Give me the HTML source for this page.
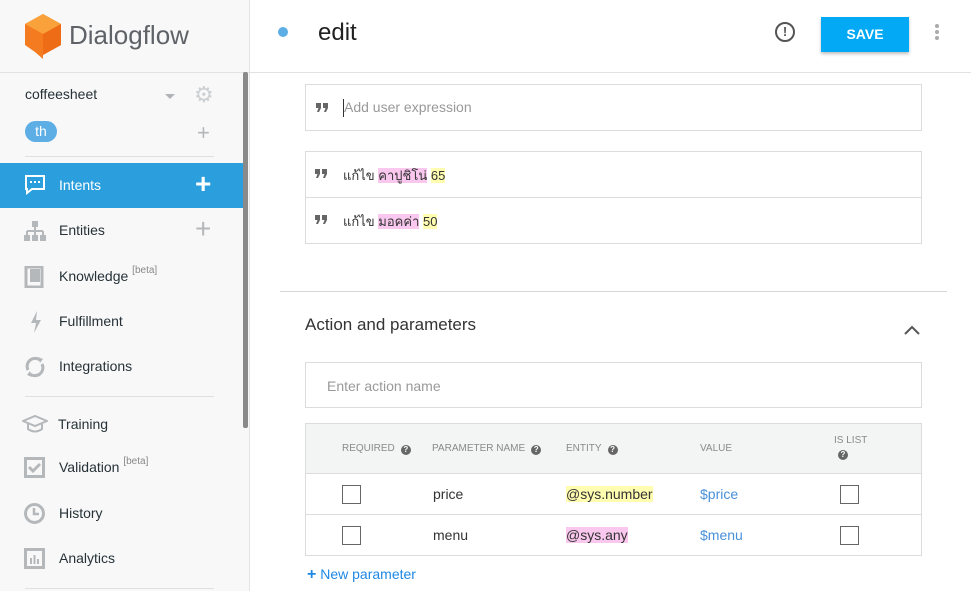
<!DOCTYPE html>
<html><head><meta charset="utf-8"><style>
*{box-sizing:border-box;margin:0;padding:0}
body{width:971px;height:591px;overflow:hidden;position:relative;font-family:"Liberation Sans","Noto Sans CJK SC",sans-serif;background:#fff;color:#333}
.abs{position:absolute}
#side{left:0;top:0;width:250px;height:591px;background:#f8f8f8;border-right:1px solid #e4e4e4}
.nav{position:absolute;left:0;width:243px;height:45px;font-size:14px;color:#263238}
.nav span.t{position:absolute;left:59px;top:14px}
.nav sup{font-size:10px;color:#888;vertical-align:top;position:relative;top:-3px}
.ic{position:absolute;left:24px;top:12px}
.hl{background:#fffdb0}.pk{background:#fac8ef}
.box{border:1px solid #dcdcdc;position:absolute}
.q{position:absolute}
.cb{position:absolute;width:19px;height:19px;border:1px solid #666;background:#fff}
.hd{position:absolute;top:19px;font-size:10px;color:#8a8a8a}
.qm{display:inline-block;width:10px;height:10px;border-radius:50%;background:#666;color:#fff;font-size:8px;text-align:center;line-height:10px;font-weight:bold;margin-left:6px;vertical-align:-1px}
</style></head><body>
<div id="side" class="abs">
 <svg class="abs" style="left:25px;top:14px" width="36" height="45" viewBox="0 0 36 45"><polygon points="18,0 36,10 36,31 18,41 18,45 10,38 0,31 0,10" fill="#f47b20"/><polygon points="18,0 36,10 18,20 0,10" fill="#f9a23b"/><polygon points="18,20 36,10 36,31 18,41" fill="#ef6c17"/></svg>
 <div class="abs" style="left:69px;top:20px;font-size:26px;color:#5f6368">Dialogflow</div>
 <div class="abs" style="left:0;top:72px;width:250px;border-top:1px solid #e2e2e2"></div>
 <div class="abs" style="left:243px;top:72px;width:5px;height:356px;background:#8a8a8a;border-radius:2px"></div>
 <div class="abs" style="left:25px;top:86px;font-size:14px;color:#263238">coffeesheet</div>
 <div class="abs" style="left:165px;top:94px;width:0;height:0;border-left:5px solid transparent;border-right:5px solid transparent;border-top:5px solid #b0b4b8"></div>
 <div class="abs" style="left:194px;top:84px;font-size:22px;color:#cdd0d3;line-height:22px">⚙</div>
 <div class="abs" style="left:25px;top:121px;width:32px;height:21px;border-radius:11px;background:#5eaee6;color:#fff;font-size:14px;text-align:center;line-height:20px">th</div>
 <div class="abs" style="left:197px;top:120px;font-size:22px;color:#b5b8bb;line-height:26px">+</div>
 <div class="abs" style="left:25px;top:156px;width:189px;border-top:1px solid #e0e0e0"></div>
 <div class="nav" style="top:163px;background:#2b9fdd;color:#fff"><svg class="ic" width="22" height="20" viewBox="0 0 22 20"><path d="M2 1h18v13H8l-5 4v-4H2z" fill="none" stroke="#fff" stroke-width="2"/><rect x="6" y="6" width="2" height="2" fill="#fff"/><rect x="10" y="6" width="2" height="2" fill="#fff"/><rect x="14" y="6" width="2" height="2" fill="#fff"/></svg><span class="t">Intents</span><span class="abs" style="left:195px;top:5px;font-size:28px;font-weight:bold">+</span></div>
 <div class="nav" style="top:208px"><svg class="ic" width="22" height="22" viewBox="0 0 22 22"><rect x="8" y="1" width="6" height="6" fill="#b5b8bb"/><path d="M11 7v4M3 11h16M3 11v4M11 11v4M19 11v4" stroke="#b5b8bb" stroke-width="2"/><rect x="0" y="15" width="6" height="6" fill="#b5b8bb"/><rect x="8" y="15" width="6" height="6" fill="#b5b8bb"/><rect x="16" y="15" width="6" height="6" fill="#b5b8bb"/></svg><span class="t">Entities</span><span class="abs" style="left:195px;top:5px;font-size:28px;color:#b5b8bb">+</span></div>
 <div class="nav" style="top:254px"><svg class="ic" width="20" height="22" viewBox="0 0 20 22"><rect x="2" y="1" width="16" height="20" fill="none" stroke="#b5b8bb" stroke-width="3"/><rect x="6" y="3" width="10" height="13" fill="#b5b8bb"/></svg><span class="t">Knowledge <sup>[beta]</sup></span></div>
 <div class="nav" style="top:299px"><svg class="ic" width="20" height="22" viewBox="0 0 20 22" style="left:28px"><path d="M9 0L3 12h5l-2 10 7-13H8z" fill="#b5b8bb"/></svg><span class="t">Fulfillment</span></div>
 <div class="nav" style="top:344px"><svg class="ic" width="22" height="22" viewBox="0 0 22 22"><path d="M4 14a8 8 0 0 1 12-10M18 8a8 8 0 0 1-12 10" fill="none" stroke="#b5b8bb" stroke-width="3"/><path d="M14 1l5 2-3 4zM8 21l-5-2 3-4z" fill="#b5b8bb"/></svg><span class="t">Integrations</span></div>
 <div class="abs" style="left:25px;top:396px;width:189px;border-top:1px solid #e0e0e0"></div>
 <div class="nav" style="top:402px"><svg class="ic" width="26" height="20" viewBox="0 0 26 20" style="left:22px"><path d="M1 7l12-5 12 5-12 5z" fill="none" stroke="#b5b8bb" stroke-width="2"/><path d="M6 10v5q7 5 14 0v-5" fill="none" stroke="#b5b8bb" stroke-width="2"/></svg><span class="t" style="left:58px">Training</span></div>
 <div class="nav" style="top:445px"><svg class="ic" width="21" height="21" viewBox="0 0 21 21"><rect x="0" y="0" width="21" height="21" fill="#b5b8bb"/><rect x="3" y="3" width="15" height="15" fill="#f8f8f8"/><path d="M5 10l4 4 7-7" fill="none" stroke="#b5b8bb" stroke-width="3"/></svg><span class="t">Validation <sup>[beta]</sup></span></div>
 <div class="nav" style="top:491px"><svg class="ic" width="21" height="21" viewBox="0 0 21 21"><circle cx="10.5" cy="10.5" r="9" fill="none" stroke="#b5b8bb" stroke-width="3"/><path d="M10 5v6h5" fill="none" stroke="#b5b8bb" stroke-width="2.5"/></svg><span class="t">History</span></div>
 <div class="nav" style="top:536px"><svg class="ic" width="21" height="21" viewBox="0 0 21 21"><rect x="0" y="0" width="21" height="21" fill="#b5b8bb"/><rect x="3" y="3" width="15" height="15" fill="#f8f8f8"/><rect x="6" y="10" width="2" height="6" fill="#b5b8bb"/><rect x="9.5" y="7" width="2" height="9" fill="#b5b8bb"/><rect x="13" y="11" width="2" height="5" fill="#b5b8bb"/></svg><span class="t">Analytics</span></div>
 <div class="abs" style="left:25px;top:588px;width:189px;border-top:1px solid #e0e0e0"></div>
</div>

<div class="abs" style="left:278px;top:27px;width:10px;height:10px;border-radius:50%;background:#5eaee6"></div>
<div class="abs" style="left:318px;top:19px;font-size:24px;color:#212121">edit</div>
<div class="abs" style="left:775px;top:22px;width:20px;height:20px;border:2px solid #555;border-radius:50%;text-align:center;font-size:13px;line-height:16px;font-weight:bold;color:#555">!</div>
<div class="abs" style="left:821px;top:17px;width:88px;height:35px;background:#03a9f4;color:#fff;font-size:14px;font-weight:bold;text-align:center;line-height:35px;box-shadow:0 2px 3px rgba(0,0,0,.25)">SAVE</div>
<div class="abs" style="left:935px;top:24px;width:4px;height:4px;border-radius:2px;background:#aaa;box-shadow:0 6px 0 #aaa,0 12px 0 #aaa"></div>
<div class="abs" style="left:250px;top:72px;width:721px;border-top:1px solid #e2e2e2"></div>

<svg width="0" height="0" style="position:absolute"><defs><symbol id="qq" viewBox="0 0 12 9"><path d="M0 0h5v5l-2 4H1l1.5-4H0zM7 0h5v5l-2 4H8l1.5-4H7z" fill="#666"/></symbol></defs></svg>
<div class="box" style="left:305px;top:84px;width:617px;height:47px"><svg class="q" style="left:10px;top:18px" width="12" height="9"><use href="#qq"/></svg><span class="abs" style="left:37px;top:14px;width:1px;height:18px;background:#333"></span><span class="abs" style="left:38px;top:14px;font-size:14px;color:#999">Add user expression</span></div>
<div class="box" style="left:305px;top:151px;width:617px;height:93px"></div>
<div class="abs" style="left:306px;top:197px;width:615px;border-top:1px solid #dcdcdc"></div>
<svg class="q" style="left:315px;top:169px" width="12" height="9"><use href="#qq"/></svg><div class="abs" style="left:343px;top:165px;font-size:13px">แก้ไข <span class="pk">คาปูชิโน่</span> <span class="hl">65</span></div>
<svg class="q" style="left:315px;top:215px" width="12" height="9"><use href="#qq"/></svg><div class="abs" style="left:343px;top:211px;font-size:13px">แก้ไข <span class="pk">มอคค่า</span> <span class="hl">50</span></div>

<div class="abs" style="left:280px;top:291px;width:667px;border-top:1px solid #d6d6d6"></div>
<div class="abs" style="left:305px;top:315px;font-size:17px;color:#333">Action and parameters</div>
<svg class="abs" style="left:903px;top:324px" width="18" height="12" viewBox="0 0 18 12"><path d="M2 10l7-7 7 7" fill="none" stroke="#555" stroke-width="2"/></svg>
<div class="box" style="left:305px;top:362px;width:617px;height:46px"><span class="abs" style="left:21px;top:15px;font-size:14px;color:#999">Enter action name</span></div>

<div class="box" style="left:305px;top:423px;width:617px;height:133px;background:#fff">
 <div class="abs" style="left:0;top:0;width:615px;height:50px;background:#f3f5f5;border-bottom:1px solid #dcdcdc"></div>
 <div class="hd" style="left:36px">REQUIRED<span class="qm">?</span></div>
 <div class="hd" style="left:126px">PARAMETER NAME<span class="qm">?</span></div>
 <div class="hd" style="left:260px">ENTITY<span class="qm">?</span></div>
 <div class="hd" style="left:394px">VALUE</div>
 <div class="hd" style="left:528px;top:11px">IS LIST<br><span class="qm" style="margin:4px 0 0 4px">?</span></div>
 <div class="abs" style="left:0;top:90px;width:615px;border-top:1px solid #dcdcdc"></div>
 <div class="cb" style="left:36px;top:61px"></div><div class="abs" style="left:127px;top:62px;font-size:14px">price</div><div class="abs hl" style="left:260px;top:62px;font-size:14px">@sys.number</div><div class="abs" style="left:394px;top:62px;font-size:14px;color:#4a90d9">$price</div><div class="cb" style="left:534px;top:61px"></div>
 <div class="cb" style="left:36px;top:102px"></div><div class="abs" style="left:127px;top:103px;font-size:14px">menu</div><div class="abs pk" style="left:260px;top:103px;font-size:14px">@sys.any</div><div class="abs" style="left:394px;top:103px;font-size:14px;color:#4a90d9">$menu</div><div class="cb" style="left:534px;top:102px"></div>
</div>
<div class="abs" style="left:307px;top:566px;font-size:14px;color:#1e88e5"><b style="font-size:16px">+</b> New parameter</div>
</body></html>
